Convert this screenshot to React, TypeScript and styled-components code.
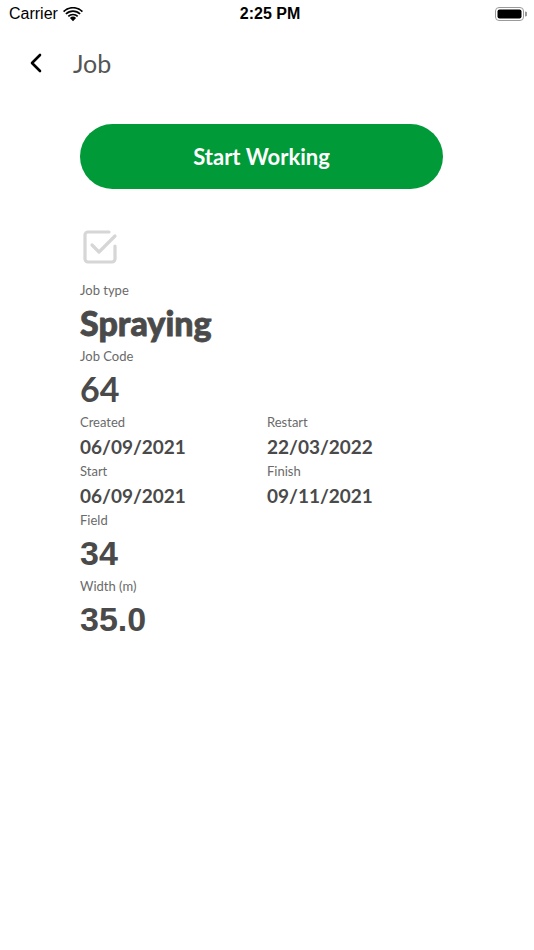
import React from "react";
import styled, { createGlobalStyle } from "styled-components";

const Global = createGlobalStyle`
  html, body { margin: 0; padding: 0; background: #fff; }
  body { font-family: Lato, "Noto Sans", sans-serif; }
`;

const Screen = styled.div`
  width: 534px;
  height: 950px;
  background: #ffffff;
  display: flex;
  flex-direction: column;
`;

const StatusBar = styled.div`
  height: 28px;
  display: grid;
  grid-template-columns: 1fr auto 1fr;
  align-items: center;
  padding: 0 7px 0 9px;
  font-family: "Liberation Sans", Arial, sans-serif;
  color: #000;
`;

const StatusLeft = styled.div`
  display: flex;
  align-items: center;
  gap: 5px;
  font-size: 16px;
`;

const StatusTime = styled.div`
  font-size: 16px;
  font-weight: 700;
  padding-left: 4px;
`;

const StatusRight = styled.div`
  display: flex;
  justify-content: flex-end;
  align-items: center;
`;

const NavBar = styled.div`
  height: 70px;
  display: flex;
  align-items: center;
  padding-left: 29px;
  gap: 26px;
`;

const BackButton = styled.button`
  background: none;
  border: none;
  padding: 0;
  width: 18px;
  height: 24px;
  display: flex;
  align-items: center;
  cursor: pointer;
`;

const NavTitle = styled.div`
  font-family: Lato, sans-serif;
  font-size: 25px;
  color: #555555;
  font-weight: 400;
`;

const Content = styled.div`
  padding: 0 91px 0 80px;
  display: flex;
  flex-direction: column;
`;

const PrimaryButton = styled.button`
  margin-top: 26px;
  height: 65px;
  width: 363px;
  border-radius: 33px;
  border: none;
  background: #009a38;
  color: #ffffff;
  font-family: Lato, sans-serif;
  font-weight: 700;
  font-size: 22px;
  cursor: pointer;
`;

const IconWrap = styled.div`
  margin-top: 40px;
  margin-left: 2px;
  height: 38px;
`;

const Field = styled.div`
  display: flex;
  flex-direction: column;
`;

const Label = styled.div`
  font-family: Lato, sans-serif;
  font-size: 13px;
  color: #6a6a6a;
  line-height: 20px;
  height: 20px;
`;

const BigValue = styled.div<{ $arial?: boolean; $heavy?: boolean }>`
  font-family: ${(p) => (p.$arial ? `"Liberation Sans", Arial, sans-serif` : `Lato, sans-serif`)};
  font-weight: ${(p) => (p.$heavy ? 900 : 700)};
  font-size: 34px;
  -webkit-text-stroke: ${(p) => (p.$heavy ? "0.8px #4a4a4a" : "0")};
  color: #4a4a4a;
  line-height: 46px;
  height: 46px;
`;

const DateValue = styled.div`
  font-family: Lato, sans-serif;
  font-weight: 700;
  font-size: 19px;
  color: #4a4a4a;
  line-height: 29px;
  height: 29px;
`;

const TwoCol = styled.div`
  display: grid;
  grid-template-columns: 187px 1fr;
`;

const FirstField = styled(Field)`
  margin-top: 13px;
`;

const Wifi = () => (
  <svg width="20" height="15" viewBox="0 0 20 15">
    <path d="M10 14.2 L6.9 11 A4.5 4.5 0 0 1 13.1 11 Z" fill="#000" />
    <path d="M4.7 8.8 A7.6 7.6 0 0 1 15.3 8.8 L14.1 10 A5.9 5.9 0 0 0 5.9 10 Z" fill="#000" />
    <path d="M2.3 6.4 A11 11 0 0 1 17.7 6.4 L16.5 7.6 A9.3 9.3 0 0 0 3.5 7.6 Z" fill="#000" />
    <path d="M0 4 A14.2 14.2 0 0 1 20 4 L18.8 5.2 A12.5 12.5 0 0 0 1.2 5.2 Z" fill="#000" />
  </svg>
);

const Battery = () => (
  <svg width="32" height="14" viewBox="0 0 32 14">
    <rect x="0.5" y="0.5" width="28" height="13" rx="3.5" fill="none" stroke="#9a9a9a" strokeWidth="1" />
    <rect x="2.5" y="2.5" width="24" height="9" rx="2" fill="#000" />
    <path d="M30 4.5 A2 2 0 0 1 30 9.5 Z" fill="#9a9a9a" />
  </svg>
);

const Chevron = () => (
  <svg width="14" height="22" viewBox="0 0 14 22">
    <path d="M11 3 L3 11 L11 19" fill="none" stroke="#000" strokeWidth="2.6" strokeLinecap="round" strokeLinejoin="round" />
  </svg>
);

const CheckIcon = () => (
  <svg width="36" height="36" viewBox="0 0 36 36">
    <path
      d="M33 17 V30 A3 3 0 0 1 30 33 H6 A3 3 0 0 1 3 30 V6 A3 3 0 0 1 6 3 H27"
      fill="none"
      stroke="#d6d6d6"
      strokeWidth="3.2"
      strokeLinecap="round"
    />
    <path d="M10 16 L17 23 L33 7" fill="none" stroke="#d6d6d6" strokeWidth="3.2" strokeLinecap="round" strokeLinejoin="round" />
  </svg>
);

export default function App() {
  return (
    <Screen>
      <Global />
      <StatusBar>
        <StatusLeft>
          Carrier <Wifi />
        </StatusLeft>
        <StatusTime>2:25 PM</StatusTime>
        <StatusRight>
          <Battery />
        </StatusRight>
      </StatusBar>
      <NavBar>
        <BackButton aria-label="Back">
          <Chevron />
        </BackButton>
        <NavTitle>Job</NavTitle>
      </NavBar>
      <Content>
        <PrimaryButton>Start Working</PrimaryButton>
        <IconWrap>
          <CheckIcon />
        </IconWrap>
        <FirstField>
          <Label>Job type</Label>
          <BigValue $heavy>Spraying</BigValue>
        </FirstField>
        <Field>
          <Label>Job Code</Label>
          <BigValue>64</BigValue>
        </Field>
        <TwoCol>
          <Field>
            <Label>Created</Label>
            <DateValue>06/09/2021</DateValue>
          </Field>
          <Field>
            <Label>Restart</Label>
            <DateValue>22/03/2022</DateValue>
          </Field>
          <Field>
            <Label>Start</Label>
            <DateValue>06/09/2021</DateValue>
          </Field>
          <Field>
            <Label>Finish</Label>
            <DateValue>09/11/2021</DateValue>
          </Field>
        </TwoCol>
        <Field>
          <Label>Field</Label>
          <BigValue $arial>34</BigValue>
        </Field>
        <Field>
          <Label>Width (m)</Label>
          <BigValue $arial>35.0</BigValue>
        </Field>
      </Content>
    </Screen>
  );
}
